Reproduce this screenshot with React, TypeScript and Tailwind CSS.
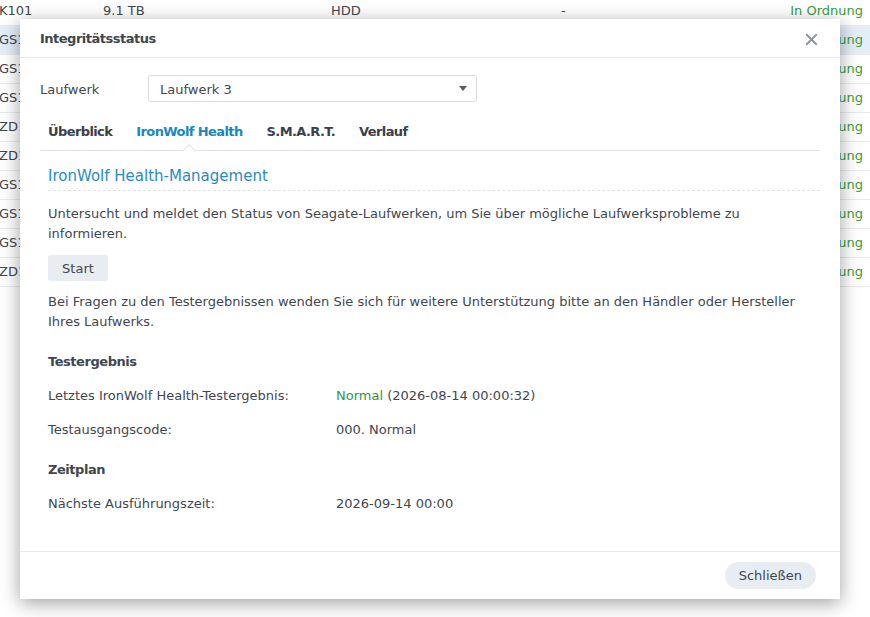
import { X } from 'lucide-react';

const rows = [
  { id: 'K101', size: '9.1 TB', full: true },
  { id: 'GS1', active: true },
  { id: 'GS1' },
  { id: 'GS1' },
  { id: 'ZD1' },
  { id: 'ZD1' },
  { id: 'GS1' },
  { id: 'GS1' },
  { id: 'GS1' },
  { id: 'ZD1' },
];

const tabs = ['Überblick', 'IronWolf Health', 'S.M.A.R.T.', 'Verlauf'];

const App = () => {
  return (
    <div className="relative h-[617px] w-[870px] overflow-hidden bg-white font-['Verdana','DejaVu_Sans',sans-serif] text-[13px] text-[#3f474e]">
      {/* disk list behind the dialog */}
      <div className="-mt-[3px]">
        {rows.map((row, i) => (
          <div
            key={i}
            className={`grid h-[29px] grid-cols-[103px_228px_230px_1fr_auto] items-center border-b border-[#e8ebee] pr-[7px] ${
              row.active ? 'bg-[#e3eef9]' : ''
            } ${i === 0 ? 'shadow-[0_2px_3px_rgba(0,0,0,0.08)]' : ''}`}
          >
            <span className="-ml-px">{row.id}</span>
            <span>{row.full ? row.size : ''}</span>
            <span>{row.full ? 'HDD' : ''}</span>
            <span>{row.full ? '-' : ''}</span>
            <span className="text-[#3a9d3a]">In Ordnung</span>
          </div>
        ))}
      </div>

      {/* dialog */}
      <div className="absolute left-[20px] top-[19px] flex h-[580px] w-[820px] flex-col bg-white shadow-[0_4px_18px_rgba(0,0,0,0.38)]">
        <div className="flex h-[39px] shrink-0 items-center justify-between border-b border-[#e6e9ec] pl-[20px] pr-[19px] pt-[2px]">
          <span className="font-bold tracking-[-0.5px]">Integritätsstatus</span>
          <X size={19} strokeWidth={2.3} className="text-[#8d939a]" />
        </div>

        <div className="flex flex-1 flex-col px-[20px]">
          <div className="mt-[17px] flex items-center">
            <span className="w-[108px] pt-[2px]">Laufwerk</span>
            <div className="flex h-[27px] w-[329px] items-center justify-between rounded-[3px] border border-[#d9dde1] pl-[11px] pr-[9px]">
              <span className="pt-[2px]">Laufwerk 3</span>
              <span className="h-0 w-0 border-l-[4px] border-r-[4px] border-t-[5px] border-l-transparent border-r-transparent border-t-[#555b61]" />
            </div>
          </div>

          <div className="mt-[11px] flex h-[38px] gap-[24px] border-b border-[#e1e4e7] pl-[8px]">
            {tabs.map((t) => (
              <div
                key={t}
                className={`relative flex items-center pt-[1px] font-bold tracking-[-0.6px] ${
                  t === 'IronWolf Health' ? 'text-[#1b87c0]' : 'text-[#3a4148]'
                }`}
              >
                {t}
                {t === 'IronWolf Health' && (
                  <span className="absolute bottom-[-6px] left-1/2 h-[10px] w-[10px] -translate-x-1/2 rotate-45 border-l border-t border-[#e1e4e7] bg-white" />
                )}
              </div>
            ))}
          </div>

          <div className="pl-[8px]">
            <div className="mt-[15px] border-b border-dashed border-[#dde1e5] pb-[4px] text-[15px] leading-[20px] text-[#2b8ac1]">
              IronWolf Health-Management
            </div>

            <p className="mt-[13px] pr-[8px] leading-[20px]">
              Untersucht und meldet den Status von Seagate-Laufwerken, um Sie über mögliche Laufwerksprobleme zu informieren.
            </p>

            <button className="mt-[11px] h-[26px] w-[60px] rounded-[3px] bg-[#e8edf2] pt-[1px] text-[13px] text-[#3f474e]">
              Start
            </button>

            <p className="mt-[11px] pr-[20px] leading-[20px]">
              Bei Fragen zu den Testergebnissen wenden Sie sich für weitere Unterstützung bitte an den Händler oder Hersteller Ihres Laufwerks.
            </p>

            <div className="mt-[20px] font-bold leading-[20px] tracking-[-0.45px]">Testergebnis</div>
            <div className="mt-[14px] flex leading-[20px]">
              <span className="w-[288px]">Letztes IronWolf Health-Testergebnis:</span>
              <span>
                <span className="text-[#2f9a3a]">Normal</span> (2026-08-14 00:00:32)
              </span>
            </div>
            <div className="mt-[14px] flex leading-[20px]">
              <span className="w-[288px]">Testausgangscode:</span>
              <span>000. Normal</span>
            </div>

            <div className="mt-[20px] font-bold leading-[20px] tracking-[-0.45px]">Zeitplan</div>
            <div className="mt-[14px] flex leading-[20px]">
              <span className="w-[288px]">Nächste Ausführungszeit:</span>
              <span>2026-09-14 00:00</span>
            </div>
          </div>
        </div>

        <div className="flex h-[48px] shrink-0 items-center justify-end border-t border-[#e6e9ec] pr-[24px]">
          <button className="h-[27px] rounded-full bg-[#e8edf3] px-[14px] pt-[1px] text-[13px] text-[#3f474e]">
            Schließen
          </button>
        </div>
      </div>
    </div>
  );
};

export default App;
